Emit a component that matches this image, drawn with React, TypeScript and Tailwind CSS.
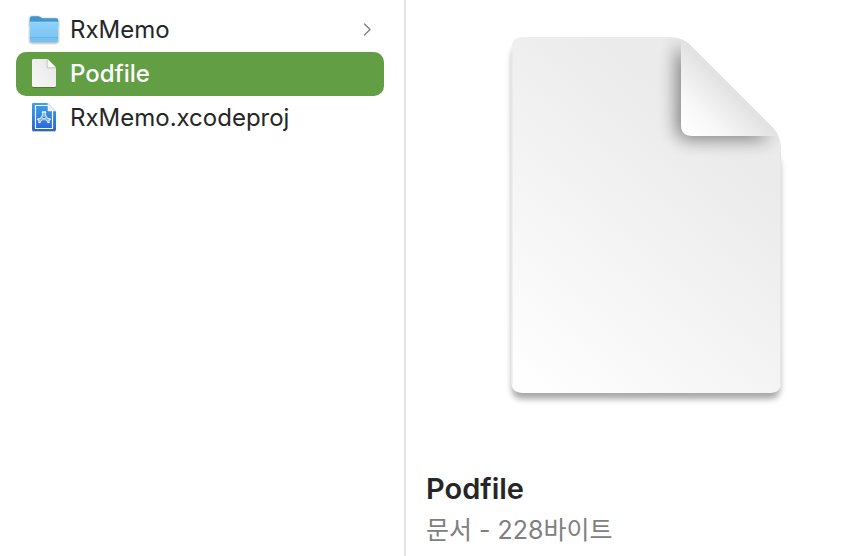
import type { ReactNode } from "react";

function FolderIcon() {
  return (
    <svg viewBox="0 0 32 32" className="size-8 shrink-0" aria-hidden>
      <defs>
        <linearGradient id="folder-front" x1="0" y1="0" x2="0" y2="1">
          <stop offset="0" stopColor="#8fd2fa" />
          <stop offset="1" stopColor="#76c1f0" />
        </linearGradient>
        <filter id="folder-shadow" x="-20%" y="-20%" width="140%" height="150%">
          <feDropShadow dx="0" dy="0.7" stdDeviation="0.8" floodOpacity="0.5" />
        </filter>
      </defs>
      <g filter="url(#folder-shadow)">
        <path d="M1.8 4.2Q1.8 2.2 3.8 2.2H10.2Q11.4 2.2 12.2 3L13 3.6Q13.8 4.2 15 4.2H28.2Q30.2 4.2 30.2 6.2V12H1.8Z" fill="#4594cc" />
        <path d="M1.8 9Q1.8 7.8 3.2 7.8H28.8Q30.2 7.8 30.2 9V26.4Q30.2 28.2 28.4 28.2H3.6Q1.8 28.2 1.8 26.4Z" fill="url(#folder-front)" />
      </g>
      <path d="M2.5 8.3H29.5" stroke="#9bd8fb" strokeWidth="0.8" />
      <path d="M2 23.5H30" stroke="#5fabda" strokeWidth="0.7" />
      <path d="M2 25.5H30" stroke="#6db6e4" strokeWidth="0.5" />
    </svg>
  );
}

function FileIcon() {
  return (
    <svg viewBox="0 0 32 32" className="size-8 shrink-0" aria-hidden>
      <defs>
        <linearGradient id="file-paper" x1="0" y1="1" x2="1" y2="0">
          <stop offset="0" stopColor="#f8f8f8" />
          <stop offset="1" stopColor="#e6e6e6" />
        </linearGradient>
        <filter id="file-shadow" x="-20%" y="-20%" width="140%" height="150%">
          <feDropShadow dx="0" dy="0.6" stdDeviation="0.5" floodOpacity="0.4" />
        </filter>
      </defs>
      <path
        d="M4 2.4Q4 1 5.4 1H18.6Q19.6 1 20.4 1.8L27.3 8.7Q28 9.4 28 10.4V27.6Q28 29 26.6 29H5.4Q4 29 4 27.6Z"
        fill="url(#file-paper)"
        filter="url(#file-shadow)"
      />
      <path d="M19.2 1.6V9.2Q19.2 9.8 19.8 9.8H28" fill="none" stroke="#b8b8b8" strokeWidth="1" />
      <path d="M19.7 1.3L27.7 9.3H20.3Q19.7 9.3 19.7 8.7Z" fill="#f8f8f8" />
    </svg>
  );
}

function XcodeProjectIcon() {
  return (
    <svg viewBox="0 0 32 32" className="size-8 shrink-0" aria-hidden>
      <defs>
        <linearGradient id="project-paper" x1="0" y1="0" x2="0" y2="1">
          <stop offset="0" stopColor="#3fa2e2" />
          <stop offset="1" stopColor="#2a63d9" />
        </linearGradient>
        <filter id="project-shadow" x="-20%" y="-20%" width="140%" height="150%">
          <feDropShadow dx="0" dy="0.6" stdDeviation="0.5" floodOpacity="0.35" />
        </filter>
      </defs>
      <path
        d="M4 2.4Q4 1 5.4 1H18.6Q19.6 1 20.4 1.8L27.3 8.7Q28 9.4 28 10.4V27.6Q28 29 26.6 29H5.4Q4 29 4 27.6Z"
        fill="url(#project-paper)"
        filter="url(#project-shadow)"
      />
      <path d="M20 3.5H7.5V26.5H24.5V9" fill="none" stroke="#f2f8ff" strokeWidth="1.2" />
      <path d="M19.7 1.3L27.7 9.3H20.3Q19.7 9.3 19.7 8.7Z" fill="#f1f2f4" />
      <g fill="none" strokeLinecap="round">
        <g stroke="#e6f1fd" strokeWidth="2.6">
          <path d="M10.6 17.2H21.4" />
          <path d="M17 10.4L11.4 20" />
          <path d="M15 10.4L20.6 20" />
        </g>
        <g stroke="#5c9de8" strokeWidth="0.8">
          <path d="M11 17.2H21" />
          <path d="M16.6 11L11.7 19.5" />
          <path d="M15.4 11L20.3 19.5" />
        </g>
      </g>
      <path d="M16 13.6L17.4 16H14.6ZM13.8 18.6H18.2V20.4H13.2Z" fill="#327ae0" />
    </svg>
  );
}

const sheet =
  "M15.5 27Q15.5 15 27 15H174Q186 15 194 23L277 106Q285 114 285 126V360Q285 371 274 371H27Q15.5 371 15.5 360Z";

function DocumentPreview() {
  return (
    <svg viewBox="0 0 300 400" className="w-[300px] max-w-full" role="img" aria-label="Podfile">
      <defs>
        <linearGradient id="preview-paper" gradientUnits="userSpaceOnUse" x1="20" y1="350" x2="220" y2="120">
          <stop offset="0" stopColor="#fefefe" />
          <stop offset="1" stopColor="#ebebeb" />
        </linearGradient>
        <linearGradient id="preview-fold" gradientUnits="userSpaceOnUse" x1="187" y1="112" x2="236" y2="63">
          <stop offset="0" stopColor="#ffffff" />
          <stop offset="0.4" stopColor="#f8f8f8" />
          <stop offset="1" stopColor="#e0e0e0" />
        </linearGradient>
        <clipPath id="preview-clip">
          <path d={sheet} />
        </clipPath>
        <filter id="preview-blur" x="-20%" y="-20%" width="140%" height="140%">
          <feGaussianBlur stdDeviation="3" />
        </filter>
        <filter id="preview-fold-blur" x="-40%" y="-40%" width="180%" height="180%">
          <feGaussianBlur stdDeviation="9" />
        </filter>
      </defs>
      <path
        d="M16 36Q16 24 28 24H174L274 128Q284 136 284 146V366Q284 377 273 377H27Q16 377 16 366Z"
        fill="#000"
        opacity="0.34"
        filter="url(#preview-blur)"
      />
      <path d={sheet} fill="url(#preview-paper)" />
      <g clipPath="url(#preview-clip)">
        <path d="M16 30V362M284.5 124V362" stroke="#e6e6e6" />
        <path d="M181 22L276 117H193Q181 117 181 105Z" fill="#000" opacity="0.48" filter="url(#preview-fold-blur)" />
        <path d="M185 10V103Q185 114 196 114H290V10Z" fill="url(#preview-fold)" />
      </g>
    </svg>
  );
}

function ChevronIcon() {
  return (
    <svg viewBox="0 0 10 16" className="ml-auto h-4 w-[10px] shrink-0" aria-hidden>
      <path d="M2.5 2L8 7.5L2.5 13" fill="none" stroke="#858585" strokeWidth="1.5" strokeLinecap="round" strokeLinejoin="round" />
    </svg>
  );
}

type Entry = {
  name: string;
  icon: ReactNode;
  folder?: boolean;
  selected?: boolean;
};

const entries: Entry[] = [
  { name: "RxMemo", icon: <FolderIcon />, folder: true },
  { name: "Podfile", icon: <FileIcon />, selected: true },
  { name: "RxMemo.xcodeproj", icon: <XcodeProjectIcon /> },
];

export default function App() {
  return (
    <div className="grid min-h-screen grid-cols-[406fr_448fr] bg-white font-['Inter','Noto_Sans_CJK_KR',sans-serif] text-[#262626]">
      <nav className="border-r-2 border-[#e3e3e3] py-2 pr-5 pl-4">
        <ul>
          {entries.map((entry) => (
            <li key={entry.name}>
              <button
                type="button"
                aria-current={entry.selected}
                className={`flex h-11 w-full items-center gap-[10px] rounded-[10px] px-3 text-left text-[24px] leading-8 ${
                  entry.selected ? "bg-[#629f44] font-medium text-white" : ""
                }`}
              >
                {entry.icon}
                <span className="truncate">{entry.name}</span>
                {entry.folder && <ChevronIcon />}
              </button>
            </li>
          ))}
        </ul>
      </nav>
      <main className="min-w-0 overflow-hidden pt-[22px]">
        <div className="flex justify-center pl-8">
          <DocumentPreview />
        </div>
        <div className="mt-[49px] pl-5">
          <h1 className="text-[29px] leading-9 font-semibold">Podfile</h1>
          <p className="mt-[5px] text-[25px] leading-9 text-[#808080]">문서 - 228바이트</p>
        </div>
      </main>
    </div>
  );
}
